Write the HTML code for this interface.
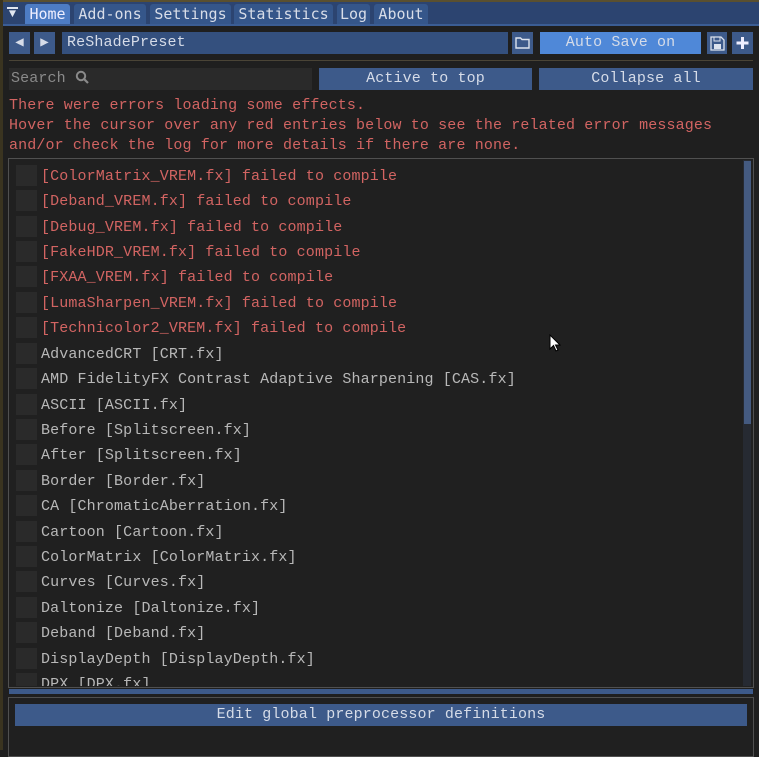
<!DOCTYPE html>
<html><head><meta charset="utf-8"><style>
*{margin:0;padding:0;box-sizing:border-box}
body{width:759px;height:750px;background:#1f1f1f;position:relative;overflow:hidden;font-family:"Liberation Mono","DejaVu Sans Mono",monospace;font-size:15px;letter-spacing:0.13px;color:#b8b8b8}
.a{position:absolute}
.tab{position:absolute;top:4px;height:21px;background:#35568a;color:#d8dde8;line-height:21px;text-align:center;border-radius:3px 3px 0 0;font-family:"DejaVu Sans Mono",monospace;font-size:15px;letter-spacing:0}
.btn{position:absolute;background:#3d5a8a;color:#d6dce8;text-align:center;line-height:22px}
.row{position:absolute;left:16px;height:21px;width:700px}
.cb{position:absolute;left:0;top:0;width:21px;height:21px;background:#2a2a2a}
.tx{position:absolute;left:25px;top:1px;line-height:21px;white-space:pre}
.err{color:#d26462}
</style></head><body>
<div class="a" style="left:0;top:0;width:759px;height:3px;background:#5a5030"></div>
<div class="a" style="left:0;top:2px;width:759px;height:24px;background:#2c4470"></div>
<div class="a" style="left:0;top:0;width:3px;height:750px;background:#3a3420"></div>
<div class="a" style="left:5px;top:7px;width:15px;height:15px;color:#e0e6f0;font-size:12px;line-height:15px;text-align:center">&#9660;</div>
<div class="a" style="left:7px;top:7px;width:11px;height:2px;background:#e0e6f0"></div>
<div class="tab" style="left:25px;width:45px;background:#4d7cc4;color:#eef">Home</div>
<div class="tab" style="left:74px;width:72px">Add-ons</div>
<div class="tab" style="left:150px;width:81px">Settings</div>
<div class="tab" style="left:234px;width:99px">Statistics</div>
<div class="tab" style="left:337px;width:33px">Log</div>
<div class="tab" style="left:374px;width:54px">About</div>
<div class="a" style="left:3px;top:24px;width:756px;height:2px;background:#3b5d94"></div>

<div class="btn" style="left:9px;top:32px;width:21px;height:22px;font-size:14px">&#9664;</div>
<div class="btn" style="left:34px;top:32px;width:21px;height:22px;font-size:14px">&#9654;</div>
<div class="btn" style="left:62px;top:32px;width:446px;height:22px;text-align:left;padding-left:5px;background:#34507e">ReShadePreset</div>
<div class="btn" style="left:512px;top:32px;width:21px;height:22px"><svg width="21" height="22"><path d="M4 6h4.5l1.5 1.5H17V16H4z" fill="none" stroke="#dde3ee" stroke-width="1.4"/></svg></div>
<div class="btn" style="left:540px;top:32px;width:161px;height:22px;background:#4f88d8">Auto Save on</div>
<div class="btn" style="left:707px;top:32px;width:20px;height:22px"><svg width="20" height="22"><path d="M4 5h10l3 3v10H4z" fill="none" stroke="#dde3ee" stroke-width="1.3"/><rect x="7" y="5" width="6" height="4" fill="none" stroke="#dde3ee"/><rect x="7" y="12" width="7" height="5" fill="#dde3ee"/></svg></div>
<div class="btn" style="left:732px;top:32px;width:21px;height:22px"><svg width="21" height="22"><path d="M10.5 5v12M4.5 11h12" stroke="#eef" stroke-width="3"/></svg></div>
<div class="a" style="left:9px;top:60px;width:744px;height:1px;background:#4a4436"></div>

<div class="a" style="left:9px;top:68px;width:303px;height:22px;background:#2a2a2a;color:#8a8a8a;line-height:22px;padding-left:2px">Search <svg width="14" height="14" style="vertical-align:-2px"><circle cx="6" cy="6" r="4.2" fill="none" stroke="#8a8a8a" stroke-width="2"/><path d="M9 9l4 4" stroke="#8a8a8a" stroke-width="2.2"/></svg></div>
<div class="btn" style="left:319px;top:68px;width:213px;height:22px">Active to top</div>
<div class="btn" style="left:539px;top:68px;width:214px;height:22px">Collapse all</div>

<div class="a err" style="left:9px;top:96px;line-height:20px;white-space:pre">There were errors loading some effects.
Hover the cursor over any red entries below to see the related error messages
and/or check the log for more details if there are none.</div>

<div class="a" style="left:8px;top:158px;width:746px;height:530px;border:1px solid #505050;background:#202020;overflow:hidden">
<div class="a" style="left:734px;top:1px;width:8px;height:526px;background:#262a32"></div>
<div class="a" style="left:735px;top:2px;width:7px;height:263px;background:#445a80"></div>
</div>
<div class="a" style="left:0;top:159px;width:740px;height:527px;overflow:hidden">
<div class="row" style="top:6px"><div class="cb"></div><div class="tx err">[ColorMatrix_VREM.fx] failed to compile</div></div>
<div class="row" style="top:31px"><div class="cb"></div><div class="tx err">[Deband_VREM.fx] failed to compile</div></div>
<div class="row" style="top:57px"><div class="cb"></div><div class="tx err">[Debug_VREM.fx] failed to compile</div></div>
<div class="row" style="top:82px"><div class="cb"></div><div class="tx err">[FakeHDR_VREM.fx] failed to compile</div></div>
<div class="row" style="top:107px"><div class="cb"></div><div class="tx err">[FXAA_VREM.fx] failed to compile</div></div>
<div class="row" style="top:133px"><div class="cb"></div><div class="tx err">[LumaSharpen_VREM.fx] failed to compile</div></div>
<div class="row" style="top:158px"><div class="cb"></div><div class="tx err">[Technicolor2_VREM.fx] failed to compile</div></div>
<div class="row" style="top:184px"><div class="cb"></div><div class="tx">AdvancedCRT [CRT.fx]</div></div>
<div class="row" style="top:209px"><div class="cb"></div><div class="tx">AMD FidelityFX Contrast Adaptive Sharpening [CAS.fx]</div></div>
<div class="row" style="top:235px"><div class="cb"></div><div class="tx">ASCII [ASCII.fx]</div></div>
<div class="row" style="top:260px"><div class="cb"></div><div class="tx">Before [Splitscreen.fx]</div></div>
<div class="row" style="top:285px"><div class="cb"></div><div class="tx">After [Splitscreen.fx]</div></div>
<div class="row" style="top:311px"><div class="cb"></div><div class="tx">Border [Border.fx]</div></div>
<div class="row" style="top:336px"><div class="cb"></div><div class="tx">CA [ChromaticAberration.fx]</div></div>
<div class="row" style="top:362px"><div class="cb"></div><div class="tx">Cartoon [Cartoon.fx]</div></div>
<div class="row" style="top:387px"><div class="cb"></div><div class="tx">ColorMatrix [ColorMatrix.fx]</div></div>
<div class="row" style="top:412px"><div class="cb"></div><div class="tx">Curves [Curves.fx]</div></div>
<div class="row" style="top:438px"><div class="cb"></div><div class="tx">Daltonize [Daltonize.fx]</div></div>
<div class="row" style="top:463px"><div class="cb"></div><div class="tx">Deband [Deband.fx]</div></div>
<div class="row" style="top:489px"><div class="cb"></div><div class="tx">DisplayDepth [DisplayDepth.fx]</div></div>
<div class="row" style="top:514px"><div class="cb"></div><div class="tx">DPX [DPX.fx]</div></div>
</div>
<div class="a" style="left:9px;top:689px;width:744px;height:5px;background:#3d5a8a"></div>
<div class="a" style="left:8px;top:697px;width:746px;height:60px;border:1px solid #505050;background:#202020"></div>
<div class="btn" style="left:15px;top:704px;width:732px;height:22px">Edit global preprocessor definitions</div>
<svg class="a" style="left:549px;top:334px" width="12" height="18"><path d="M1 1v14l3.5-3.5 2.5 5.5 2-1-2.5-5H11z" fill="#fff" stroke="#000" stroke-width="1"/></svg>
</body></html>
